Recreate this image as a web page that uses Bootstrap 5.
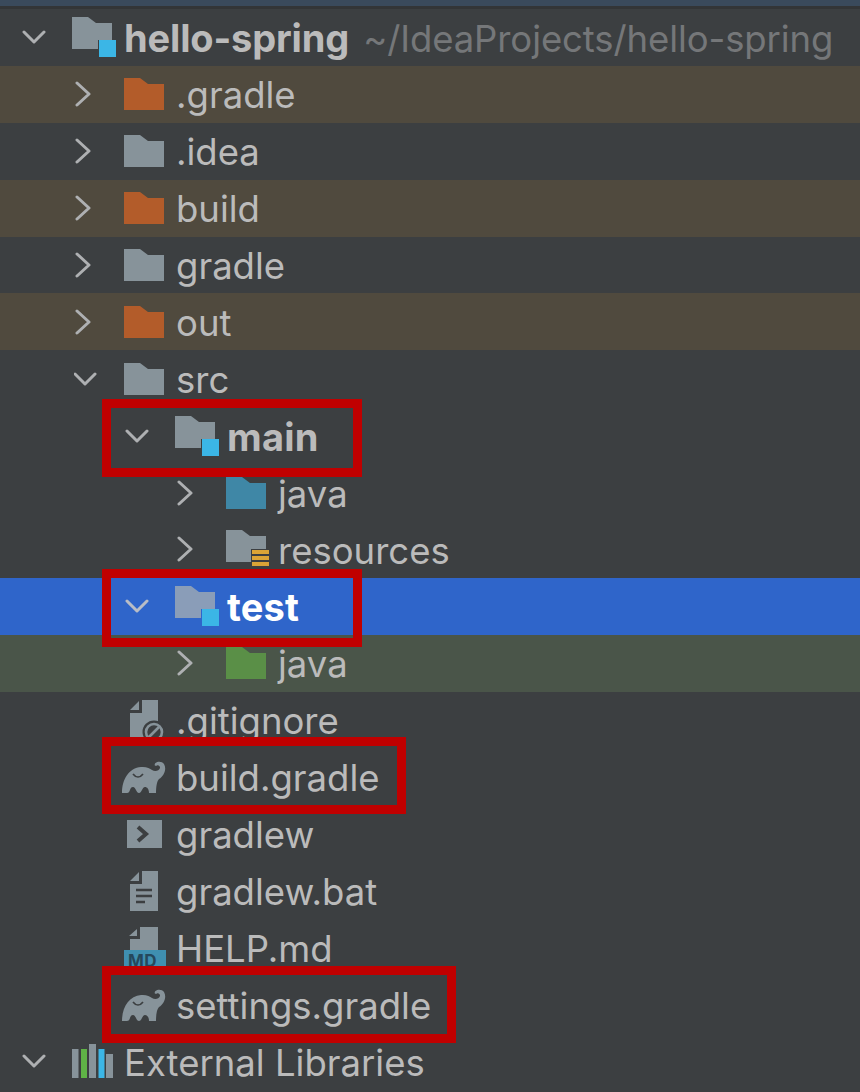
<!DOCTYPE html>
<html lang="en">
<head>
<meta charset="utf-8">
<title>Project tree</title>
<link href="https://cdn.jsdelivr.net/npm/bootstrap@5.3.0/dist/css/bootstrap.min.css" rel="stylesheet">
<style>
html,body{margin:0;background:#3c3f41;}
.ide-page{width:860px;height:1092px;position:relative;overflow:hidden;background:#3c3f41;font-family:Inter,"Liberation Sans",sans-serif;color:#bbbbbb;font-size:36.5px;}
.ide-top{height:6px;background:#3a4a5c;}
.ide-gap{height:3px;background:#333537;}
.tree-row{height:56.9px;white-space:nowrap;}
.lv0{padding-left:20px}.lv1{padding-left:72px}.lv2{padding-left:123px}.lv3{padding-left:174px}
.twist{width:52px;padding-right:24px;flex:none;display:flex;justify-content:center;}
.ico{width:52px;flex:none;display:flex;}
.lbl{position:relative;top:1.500px;}
.row-ign{background:#504a3e}
.row-green{background:#4a5549}
.row-sel{background:#2f65ca;color:#fff}
.row-sel .twist svg{stroke:#b9bdc6}
.bold-name{font-weight:700;font-size:38px;letter-spacing:.2px;}
.root-name{letter-spacing:-.15px;}
.path-txt{color:#757779;margin-left:14px;letter-spacing:-.1px;}
.redbox{position:absolute;border:9px solid #c00000;left:102px;}
.box-main{top:399px;width:260px;height:78px}
.box-test{top:569px;width:260px;height:78px}
.box-build{top:737px;width:304px;height:77px}
.box-set{top:966px;width:354px;height:77px}
.chev{fill:none;stroke:#aeb0b2;stroke-width:3;stroke-linecap:round;stroke-linejoin:round}
.sh-n2{margin-left:-2px}.sh-3{margin-left:3px}.sh-6{margin-left:6px}
</style>
</head>
<body>
<svg width="0" height="0" class="position-absolute">
<defs>
<symbol id="fold" viewBox="0 0 40 32"><path d="M0 0H16L24 6H40V32H0Z"/></symbol>
<symbol id="ele" viewBox="0 0 44 32"><path fill="#87939a" d="M0 32C0 18 7 7 19 6C24 5.500 28 7 30 9C33 11 37 10 38 7C38.500 5 36 3.500 35 4.500C33.500 5.500 32 4.500 33 2.500C35 0 40 0 42 3C45 8 42 15 37 18C35 20 34 25 34 32H27C27 28 25 26 23 26C20 26 20 32 17 32C14 32 14 26 11 26C7 26 9 32 5 32Z"/><path fill="none" stroke="#3c3f41" stroke-width="1.600" d="M11 13C14 17 18 17 21 13"/></symbol>
<symbol id="doc" viewBox="0 0 28 40"><path fill="#87939a" d="M12 0H28V40H0V13H12ZM9 1V10H0Z"/></symbol>
</defs>
</svg>
<div class="ide-page">
<div class="ide-top"></div><div class="ide-gap"></div>
<ul class="list-unstyled mb-0">
<li class="tree-row lv0 d-flex align-items-center"><span class="twist"><svg class="chev" width="24" height="16" viewBox="0 0 24 16"><path d="M2 3L12 13L22 3"/></svg></span><span class="ico"><svg width="48" height="40" viewBox="0 0 48 40"><use href="#fold" width="40" height="32" fill="#87939a"/><rect x="26" y="23" width="17" height="17" fill="#3c3f41"/><rect x="27" y="23" width="17" height="17" fill="#3bb6e6"/></svg></span><span class="lbl bold-name root-name">hello-spring</span><span class="lbl path-txt">~/IdeaProjects/hello-spring</span></li>
<li class="tree-row lv1 d-flex align-items-center row-ign"><span class="twist"><svg class="chev" width="24" height="26" viewBox="0 0 24 26"><path d="M3 2L15 13L3 24"/></svg></span><span class="ico"><svg width="40" height="32" viewBox="0 0 40 32"><use href="#fold" width="40" height="32" fill="#b35c2a"/></svg></span><span class="lbl">.gradle</span></li>
<li class="tree-row lv1 d-flex align-items-center"><span class="twist"><svg class="chev" width="24" height="26" viewBox="0 0 24 26"><path d="M3 2L15 13L3 24"/></svg></span><span class="ico"><svg width="40" height="32" viewBox="0 0 40 32"><use href="#fold" width="40" height="32" fill="#87939a"/></svg></span><span class="lbl">.idea</span></li>
<li class="tree-row lv1 d-flex align-items-center row-ign"><span class="twist"><svg class="chev" width="24" height="26" viewBox="0 0 24 26"><path d="M3 2L15 13L3 24"/></svg></span><span class="ico"><svg width="40" height="32" viewBox="0 0 40 32"><use href="#fold" width="40" height="32" fill="#b35c2a"/></svg></span><span class="lbl">build</span></li>
<li class="tree-row lv1 d-flex align-items-center"><span class="twist"><svg class="chev" width="24" height="26" viewBox="0 0 24 26"><path d="M3 2L15 13L3 24"/></svg></span><span class="ico"><svg width="40" height="32" viewBox="0 0 40 32"><use href="#fold" width="40" height="32" fill="#87939a"/></svg></span><span class="lbl">gradle</span></li>
<li class="tree-row lv1 d-flex align-items-center row-ign"><span class="twist"><svg class="chev" width="24" height="26" viewBox="0 0 24 26"><path d="M3 2L15 13L3 24"/></svg></span><span class="ico"><svg width="40" height="32" viewBox="0 0 40 32"><use href="#fold" width="40" height="32" fill="#b35c2a"/></svg></span><span class="lbl">out</span></li>
<li class="tree-row lv1 d-flex align-items-center"><span class="twist"><svg class="chev" width="24" height="16" viewBox="0 0 24 16"><path d="M1 3L11 13L21 3"/></svg></span><span class="ico"><svg width="40" height="32" viewBox="0 0 40 32"><use href="#fold" width="40" height="32" fill="#87939a"/></svg></span><span class="lbl">src</span></li>
<li class="tree-row lv2 d-flex align-items-center"><span class="twist"><svg class="chev" width="24" height="16" viewBox="0 0 24 16"><path d="M2 3L12 13L22 3"/></svg></span><span class="ico"><svg width="48" height="40" viewBox="0 0 48 40"><use href="#fold" width="40" height="32" fill="#87939a"/><rect x="26" y="23" width="17" height="17" fill="#3c3f41"/><rect x="27" y="23" width="17" height="17" fill="#3bb6e6"/></svg></span><span class="lbl bold-name">main</span></li>
<li class="tree-row lv3 d-flex align-items-center"><span class="twist"><svg class="chev" width="24" height="26" viewBox="0 0 24 26"><path d="M3 2L15 13L3 24"/></svg></span><span class="ico"><svg width="40" height="32" viewBox="0 0 40 32"><use href="#fold" width="40" height="32" fill="#3f87a6"/></svg></span><span class="lbl">java</span></li>
<li class="tree-row lv3 d-flex align-items-center"><span class="twist"><svg class="chev" width="24" height="26" viewBox="0 0 24 26"><path d="M3 2L15 13L3 24"/></svg></span><span class="ico"><svg width="44" height="38" viewBox="0 0 44 38"><use href="#fold" width="40" height="32" fill="#87939a"/><rect x="25" y="19" width="19" height="19" fill="#3c3f41"/><path fill="#dba436" d="M26 20H43V24H26ZM26 26H43V30H26ZM26 32H43V36H26Z"/></svg></span><span class="lbl">resources</span></li>
<li class="tree-row lv2 d-flex align-items-center row-sel"><span class="twist"><svg class="chev" width="24" height="16" viewBox="0 0 24 16"><path d="M2 3L12 13L22 3"/></svg></span><span class="ico"><svg width="48" height="40" viewBox="0 0 48 40"><use href="#fold" width="40" height="32" fill="#8a9db8"/><rect x="26" y="23" width="17" height="17" fill="#2f65ca"/><rect x="27" y="23" width="17" height="17" fill="#3bb6e6"/></svg></span><span class="lbl bold-name">test</span></li>
<li class="tree-row lv3 d-flex align-items-center row-green"><span class="twist"><svg class="chev" width="24" height="26" viewBox="0 0 24 26"><path d="M3 2L15 13L3 24"/></svg></span><span class="ico"><svg width="40" height="32" viewBox="0 0 40 32"><use href="#fold" width="40" height="32" fill="#5a8f47"/></svg></span><span class="lbl">java</span></li>
<li class="tree-row lv1 d-flex align-items-center"><span class="twist"></span><span class="ico"><svg class="sh-6" width="36" height="44" viewBox="0 0 36 44"><use href="#doc" width="28" height="40" y="2"/><circle cx="24" cy="34" r="11.500" fill="#3c3f41"/><circle cx="24" cy="34" r="8" fill="none" stroke="#87939a" stroke-width="2.600"/><path d="M19 39L29 29" stroke="#87939a" stroke-width="2.600"/></svg></span><span class="lbl">.gitignore</span></li>
<li class="tree-row lv1 d-flex align-items-center"><span class="twist"></span><span class="ico"><svg class="sh-n2" width="44" height="32"><use href="#ele" width="44" height="32"/></svg></span><span class="lbl">build.gradle</span></li>
<li class="tree-row lv1 d-flex align-items-center"><span class="twist"></span><span class="ico"><svg class="sh-3" width="35" height="28" viewBox="0 0 35 28"><rect width="35" height="28" fill="#87939a"/><path d="M11 7L19 14L11 21" fill="none" stroke="#3c3f41" stroke-width="4"/></svg></span><span class="lbl">gradlew</span></li>
<li class="tree-row lv1 d-flex align-items-center"><span class="twist"></span><span class="ico"><svg class="sh-6" width="28" height="40" viewBox="0 0 28 40"><use href="#doc" width="28" height="40"/><path d="M6 19H22M6 25H22M6 31H15" stroke="#3c3f41" stroke-width="2.600"/></svg></span><span class="lbl">gradlew.bat</span></li>
<li class="tree-row lv1 d-flex align-items-center"><span class="twist"></span><span class="ico"><svg width="44" height="44" viewBox="0 0 44 44"><path fill="#87939a" d="M16 1H34V24H6V13H16ZM13 3V10H5Z"/><rect x="0" y="24" width="42" height="20" fill="#3f8fb0"/><text x="4" y="41" font-family="Inter,'Liberation Sans',sans-serif" font-size="17" font-weight="700" fill="#25485c" letter-spacing=".5">MD</text></svg></span><span class="lbl">HELP.md</span></li>
<li class="tree-row lv1 d-flex align-items-center"><span class="twist"></span><span class="ico"><svg class="sh-n2" width="44" height="32"><use href="#ele" width="44" height="32"/></svg></span><span class="lbl">settings.gradle</span></li>
<li class="tree-row lv0 d-flex align-items-center"><span class="twist"><svg class="chev" width="24" height="16" viewBox="0 0 24 16"><path d="M2 3L12 13L22 3"/></svg></span><span class="ico"><svg width="41" height="34" viewBox="0 0 41 34"><path fill="#87939a" d="M0 5H6.500V34H0ZM17 0H24V34H17ZM34 10H41V34H34Z"/><rect x="9" y="5" width="6" height="29" fill="#5fb346"/><rect x="26.500" y="5" width="6" height="29" fill="#3bb6e6"/></svg></span><span class="lbl">External Libraries</span></li>
</ul>
<div class="redbox box-main"></div>
<div class="redbox box-test"></div>
<div class="redbox box-build"></div>
<div class="redbox box-set"></div>
</div>
<script src="https://cdn.jsdelivr.net/npm/bootstrap@5.3.0/dist/js/bootstrap.bundle.min.js"></script>
</body>
</html>
